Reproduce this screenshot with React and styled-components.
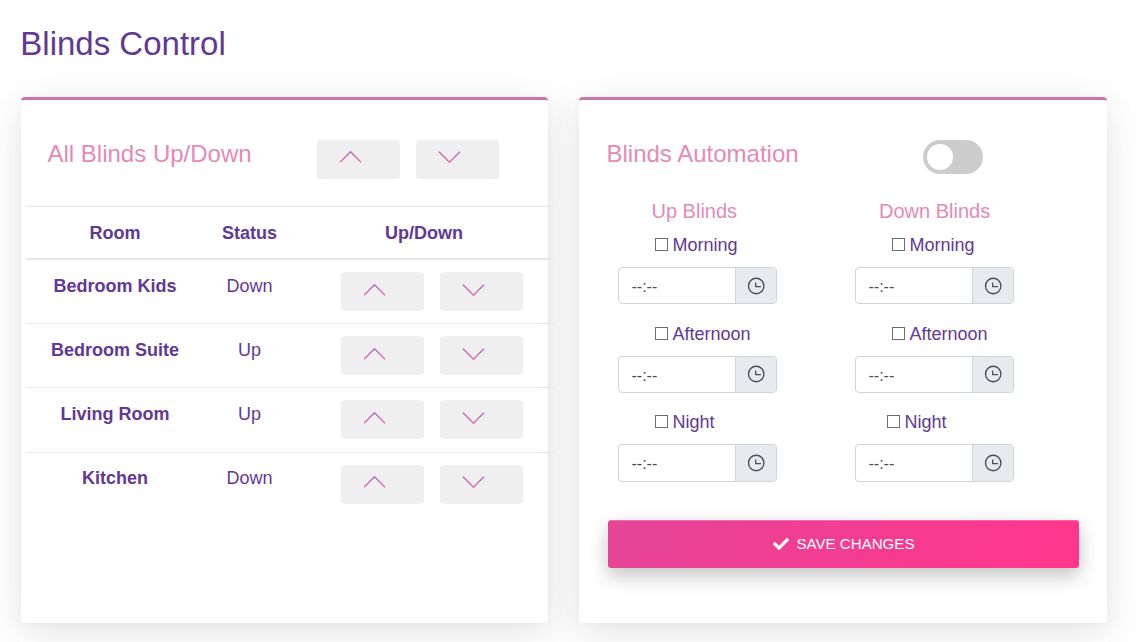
import React from "react";
import styled, { createGlobalStyle } from "styled-components";
import { FaCheck } from "react-icons/fa";

const GlobalStyle = createGlobalStyle`
  *, *::before, *::after { box-sizing: border-box; }
  body {
    margin: 0;
    background: #fff;
    color: #613893;
    font-family: "Liberation Sans", Arial, sans-serif;
    font-size: 18px;
    overflow: hidden;
  }
`;

const Page = styled.main`
  height: 642px;
  padding: 20px 0 0 21px;
  overflow: hidden;
`;

const PageTitle = styled.h1`
  margin: 0 0 29px -0.7px;
  font-size: 33px;
  font-weight: 400;
  line-height: 48px;
`;

const Cards = styled.div`
  display: flex;
  gap: 31px;
`;

const Card = styled.section`
  flex: none;
  width: ${(p) => p.$width}px;
  height: 526px;
  border-top: 3px solid #cc74b0;
  border-radius: 4px;
  background: #fff;
  box-shadow: 0 10px 40px 0 rgba(62, 45, 50, 0.13), 0 2px 9px 0 rgba(62, 45, 70, 0.03);
`;

const CardHeader = styled.header`
  display: flex;
  align-items: flex-start;
  height: ${(p) => p.$height}px;
  padding: 40px 0 0 ${(p) => p.$inset}px;
`;

const CardTitle = styled.h2`
  width: ${(p) => p.$width}px;
  margin: 0;
  color: #e48ab5;
  font-size: 24px;
  font-weight: 400;
  line-height: 28px;
`;

const ButtonPair = styled.div`
  display: flex;
  gap: 16.3px;
`;

const ArrowButton = styled.button`
  display: flex;
  align-items: flex-start;
  width: 83px;
  height: 39px;
  padding: ${(p) => p.$top}px 0 0 22px;
  border: 0;
  border-radius: 4px;
  background: #efefef;
`;

const Table = styled.table`
  width: 527px;
  margin-left: 5px;
  border-collapse: separate;
  border-spacing: 0;
  table-layout: fixed;
  text-align: center;
`;

const HeadCell = styled.th`
  width: ${(p) => p.$width}px;
  height: 54px;
  padding: 2px 0 0;
  border-top: 1px solid #e3e8ec;
  border-bottom: 2px solid #e3e8ec;
  font-weight: 700;
  line-height: 49px;
`;

const Cell = styled.td`
  height: ${(p) => p.$height}px;
  padding: ${(p) => (p.$actions ? "12px 0 0 46px" : p.$last ? "12px 0 0" : "13px 0 0")};
  border-top: ${(p) => (p.$first ? "0" : "1px solid #e3e8ec")};
  font-weight: ${(p) => (p.$bold ? 700 : 400)};
  line-height: 27px;
  vertical-align: top;
`;

const Toggle = styled.button`
  width: 60px;
  height: 34px;
  padding: 4px;
  border: 0;
  border-radius: 34px;
  background: #ccc;
`;

const Knob = styled.span`
  display: block;
  width: 26px;
  height: 26px;
  border-radius: 50%;
  background: #fff;
`;

const Schedule = styled.div`
  display: flex;
  gap: 78px;
  padding-left: 39px;
`;

const Column = styled.div`
  width: 159px;
`;

const ColumnTitle = styled.h3`
  height: 34px;
  margin: 0;
  padding-left: ${(p) => p.$inset}px;
  color: #e48ab5;
  font-size: 20px;
  font-weight: 400;
  line-height: 24px;
`;

const Slot = styled.div`
  height: 88.6px;
`;

const SlotLabel = styled.label`
  display: flex;
  align-items: flex-start;
  gap: 4.5px;
  height: 34px;
  padding-left: ${(p) => p.$inset}px;
  line-height: 24.8px;
`;

const Box = styled.span`
  width: 13px;
  height: 13px;
  margin-top: 5px;
  border: 1px solid #6d6d6d;
  background: #fff;
`;

const TimeField = styled.div`
  display: flex;
  height: 37.4px;
  border: 1px solid #ced4da;
  border-radius: 4px;
  overflow: hidden;
  color: #495057;
`;

const TimeValue = styled.span`
  flex: 1;
  padding-left: 12.5px;
  font-size: 16px;
  line-height: 38px;
`;

const ClockAddon = styled.span`
  display: flex;
  align-items: center;
  justify-content: center;
  width: 41.5px;
  padding-bottom: 0.4px;
  border-left: 1px solid #ced4da;
  background: #e7ebee;
`;

const SaveButton = styled.button`
  display: flex;
  align-items: center;
  justify-content: center;
  gap: 8px;
  width: 471px;
  height: 48px;
  margin: 21.2px 0 0 29px;
  padding: 0;
  border: 0;
  border-radius: 3px;
  background: linear-gradient(118deg, #e54598, #ff358b);
  box-shadow: inset 0 1px 0 rgba(255, 255, 255, 0.22), 0 8px 20px rgba(0, 0, 0, 0.24);
  color: #fff;
  font: 15.1px "Liberation Sans", Arial, sans-serif;
`;

function Chevron({ up }) {
  const id = up ? "chevron-up" : "chevron-down";
  return (
    <svg width="24" height="14" viewBox="0 0 24 14" fill="none">
      <defs>
        <linearGradient id={id} gradientUnits="userSpaceOnUse" x1="0" y1="1" x2="0" y2="13">
          <stop offset="0" stopColor="#a96bbb" />
          <stop offset="1" stopColor="#f06cae" />
        </linearGradient>
      </defs>
      <path d={up ? "M1 12.3L11.5 1.8L22 12.3" : "M1 1.8L11.5 12.3L22 1.8"} stroke={`url(#${id})`} strokeWidth="1.4" />
    </svg>
  );
}

function Arrows({ top }) {
  return (
    <ButtonPair>
      <ArrowButton $top={top} aria-label="Up"><Chevron up /></ArrowButton>
      <ArrowButton $top={top} aria-label="Down"><Chevron /></ArrowButton>
    </ButtonPair>
  );
}

function Clock() {
  return (
    <svg width="18" height="18" viewBox="0 0 18 18" fill="none" stroke="#495057">
      <circle cx="9.2" cy="9" r="7.7" strokeWidth="1.4" />
      <path d="M8.7 5.5V9.7H14" strokeWidth="1.3" />
    </svg>
  );
}

const rooms = [
  ["Bedroom Kids", "Down", 63],
  ["Bedroom Suite", "Up", 64],
  ["Living Room", "Up", 65],
  ["Kitchen", "Down", 64],
];

const columns = [
  { title: "Up Blinds", inset: 33.5, slots: [["Morning", 37], ["Afternoon", 37], ["Night", 37]] },
  { title: "Down Blinds", inset: 24, slots: [["Morning", 37], ["Afternoon", 37], ["Night", 32]] },
];

export default function App() {
  return (
    <Page>
      <GlobalStyle />
      <PageTitle>Blinds Control</PageTitle>
      <Cards>
        <Card $width={527}>
          <CardHeader $height={106} $inset={26.5}>
            <CardTitle $width={269.5}>All Blinds Up/Down</CardTitle>
            <Arrows top={10} />
          </CardHeader>
          <Table>
            <thead>
              <tr>
                <HeadCell $width={178}>Room</HeadCell>
                <HeadCell $width={91}>Status</HeadCell>
                <HeadCell $width={258}>Up/Down</HeadCell>
              </tr>
            </thead>
            <tbody>
              {rooms.map(([room, status, height], i) => {
                const place = { $height: height, $first: i === 0, $last: i === rooms.length - 1 };
                return (
                  <tr key={room}>
                    <Cell {...place} $bold>{room}</Cell>
                    <Cell {...place}>{status}</Cell>
                    <Cell {...place} $actions><Arrows top={place.$last ? 10 : 11} /></Cell>
                  </tr>
                );
              })}
            </tbody>
          </Table>
        </Card>
        <Card $width={528}>
          <CardHeader $height={99} $inset={27.5}>
            <CardTitle $width={316.5}>Blinds Automation</CardTitle>
            <Toggle aria-label="Automation"><Knob /></Toggle>
          </CardHeader>
          <Schedule>
            {columns.map((column) => (
              <Column key={column.title}>
                <ColumnTitle $inset={column.inset}>{column.title}</ColumnTitle>
                {column.slots.map(([label, inset]) => (
                  <Slot key={label}>
                    <SlotLabel $inset={inset}><Box />{label}</SlotLabel>
                    <TimeField>
                      <TimeValue>--:--</TimeValue>
                      <ClockAddon><Clock /></ClockAddon>
                    </TimeField>
                  </Slot>
                ))}
              </Column>
            ))}
          </Schedule>
          <SaveButton><FaCheck size={16} />SAVE CHANGES</SaveButton>
        </Card>
      </Cards>
    </Page>
  );
}
